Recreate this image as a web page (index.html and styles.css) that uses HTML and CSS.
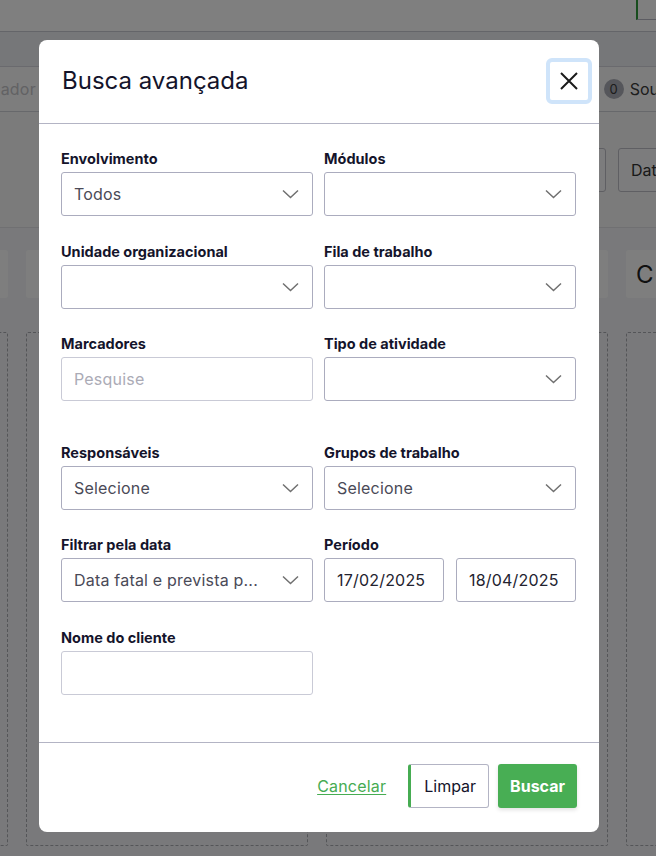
FILE: index.html
```html
<!DOCTYPE html>
<html lang="pt-BR">
<head>
<meta charset="utf-8">
<title>Busca avançada</title>
<link rel="stylesheet" href="styles.css">
</head>
<body>
<div class="app">
  <div class="app-top"><div class="top-btn"></div></div>
  <div class="app-nav"></div>
  <div class="app-search">
    <div class="search-text">Pesquise por marcador</div>
    <div class="badge-group"><span class="badge">0</span><span class="badge-label">Sou</span></div>
  </div>
  <div class="app-filters">
    <div class="filter-box"></div>
    <div class="filter-box filter-date">Data</div>
  </div>
  <div class="app-board">
    <div class="column"><div class="col-head"></div><div class="col-body"></div></div>
    <div class="column"><div class="col-head"></div><div class="col-body"></div></div>
    <div class="column"><div class="col-head"></div><div class="col-body"></div></div>
    <div class="column"><div class="col-head">C</div><div class="col-body"></div></div>
  </div>
</div>

<div class="overlay">
  <div class="modal">
    <div class="modal-header">
      <h1 class="modal-title">Busca avançada</h1>
      <button class="close-btn" aria-label="Fechar">
        <svg width="18" height="18" viewBox="0 0 18 18"><path d="M1 1 L17 17 M17 1 L1 17" stroke="#1a1a1a" stroke-width="2" fill="none"/></svg>
      </button>
    </div>
    <div class="modal-body">
      <div class="field">
        <label class="field-label">Envolvimento</label>
        <div class="select"><span class="value">Todos</span><svg class="chev" width="17" height="10" viewBox="0 0 17 10"><path d="M1 1.5 L8.5 8.5 L16 1.5" stroke="#707070" stroke-width="1.5" fill="none"/></svg></div>
      </div>
      <div class="field">
        <label class="field-label">Módulos</label>
        <div class="select"><span class="value"></span><svg class="chev" width="17" height="10" viewBox="0 0 17 10"><path d="M1 1.5 L8.5 8.5 L16 1.5" stroke="#707070" stroke-width="1.5" fill="none"/></svg></div>
      </div>
      <div class="field">
        <label class="field-label">Unidade organizacional</label>
        <div class="select"><span class="value"></span><svg class="chev" width="17" height="10" viewBox="0 0 17 10"><path d="M1 1.5 L8.5 8.5 L16 1.5" stroke="#707070" stroke-width="1.5" fill="none"/></svg></div>
      </div>
      <div class="field">
        <label class="field-label">Fila de trabalho</label>
        <div class="select"><span class="value"></span><svg class="chev" width="17" height="10" viewBox="0 0 17 10"><path d="M1 1.5 L8.5 8.5 L16 1.5" stroke="#707070" stroke-width="1.5" fill="none"/></svg></div>
      </div>
      <div class="field field-spaced">
        <label class="field-label">Marcadores</label>
        <div class="input"><span class="placeholder">Pesquise</span></div>
      </div>
      <div class="field field-spaced">
        <label class="field-label">Tipo de atividade</label>
        <div class="select"><span class="value"></span><svg class="chev" width="17" height="10" viewBox="0 0 17 10"><path d="M1 1.5 L8.5 8.5 L16 1.5" stroke="#707070" stroke-width="1.5" fill="none"/></svg></div>
      </div>
      <div class="field">
        <label class="field-label">Responsáveis</label>
        <div class="select"><span class="value">Selecione</span><svg class="chev" width="17" height="10" viewBox="0 0 17 10"><path d="M1 1.5 L8.5 8.5 L16 1.5" stroke="#707070" stroke-width="1.5" fill="none"/></svg></div>
      </div>
      <div class="field">
        <label class="field-label">Grupos de trabalho</label>
        <div class="select"><span class="value">Selecione</span><svg class="chev" width="17" height="10" viewBox="0 0 17 10"><path d="M1 1.5 L8.5 8.5 L16 1.5" stroke="#707070" stroke-width="1.5" fill="none"/></svg></div>
      </div>
      <div class="field">
        <label class="field-label">Filtrar pela data</label>
        <div class="select"><span class="value">Data fatal e prevista p...</span><svg class="chev" width="17" height="10" viewBox="0 0 17 10"><path d="M1 1.5 L8.5 8.5 L16 1.5" stroke="#707070" stroke-width="1.5" fill="none"/></svg></div>
      </div>
      <div class="field">
        <label class="field-label">Período</label>
        <div class="period">
          <div class="input date"><span class="date-text">17/02/2025</span></div>
          <div class="input date"><span class="date-text">18/04/2025</span></div>
        </div>
      </div>
      <div class="field">
        <label class="field-label">Nome do cliente</label>
        <div class="input"></div>
      </div>
    </div>
    <div class="modal-footer">
      <a class="cancel-link" href="#">Cancelar</a>
      <button class="btn btn-clear">Limpar</button>
      <button class="btn btn-search">Buscar</button>
    </div>
  </div>
</div>
</body>
</html>
```
FILE: styles.css
```css
* { box-sizing: border-box; }

body {
  margin: 0;
  width: 656px;
  height: 856px;
  overflow: hidden;
  position: relative;
  font-family: Inter, "Noto Sans", Roboto, sans-serif;
  background: #f2f3f6;
}

/* ---------- background app ---------- */
.app {
  width: 656px;
  height: 856px;
  overflow: hidden;
}

.app-top {
  height: 32px;
  background: #ffffff;
  border-bottom: 1px solid #c9cad2;
  display: flex;
  justify-content: flex-end;
}

.top-btn {
  width: 20px;
  height: 20px;
  border-left: 2px solid #2e9a3a;
  border-bottom: 1px solid #b8b8c4;
  background: #fff;
}

.app-nav {
  height: 35px;
  background: #eceef3;
  border-bottom: 1px solid #d4d5dc;
}

.app-search {
  height: 45px;
  background: #fbfbfb;
  border-bottom: 1px solid #cfd0d6;
  display: flex;
  align-items: center;
  justify-content: space-between;
}

.search-text {
  margin-left: -144px;
  font-size: 16px;
  letter-spacing: 0.2px;
  color: #c4c4c8;
  white-space: nowrap;
}

.badge-group {
  display: flex;
  align-items: center;
  gap: 6px;
  margin-right: -3px;
  white-space: nowrap;
}

.badge {
  width: 20px;
  height: 20px;
  border-radius: 50%;
  background: #abadb6;
  color: #3a3a3a;
  font-size: 13px;
  display: flex;
  align-items: center;
  justify-content: center;
}

.badge-label {
  font-size: 16px;
  color: #3c3c3c;
}

.app-filters {
  height: 116px;
  background: #f6f6f7;
  border-bottom: 1px solid #e0e0e4;
  display: flex;
  justify-content: flex-end;
  align-items: center;
  gap: 12px;
  padding-top: 1px;
  margin-right: -30px;
}

.filter-box {
  width: 50px;
  height: 44px;
  border: 1px solid #bebec6;
  border-radius: 3px;
  background: #f9f9fa;
}

.filter-date {
  width: 68px;
  font-size: 16px;
  color: #333;
  display: flex;
  align-items: center;
  padding-left: 12px;
}

.app-board {
  display: grid;
  grid-template-columns: repeat(4, 282px);
  column-gap: 18px;
  margin-left: -274px;
  padding-top: 22px;
}

.col-head {
  height: 48px;
  background: #fdfdfd;
  border-radius: 3px;
  font-size: 24px;
  color: #222;
  display: flex;
  align-items: center;
  padding-left: 10px;
}

.col-body {
  margin-top: 34px;
  height: 514px;
  border: 1px dashed #a9aab0;
  border-radius: 2px;
}

/* ---------- overlay + modal ---------- */
.overlay {
  position: absolute;
  inset: 0;
  background: rgba(0, 0, 0, 0.5);
  padding: 40px 0 0 39px;
}

.modal {
  width: 560px;
  height: 792px;
  background: #ffffff;
  border-radius: 8px;
  display: flex;
  flex-direction: column;
  overflow: hidden;
}

.modal-header {
  height: 84px;
  border-bottom: 1px solid #b3b4c4;
  display: flex;
  align-items: center;
  justify-content: space-between;
  padding: 0 7px 2px 23px;
}

.modal-title {
  margin: 0;
  font-size: 24px;
  font-weight: 400;
  color: #14142b;
}

.close-btn {
  width: 46px;
  height: 46px;
  border: 4px solid #cfe4fa;
  border-radius: 6px;
  background: #fff;
  padding: 0;
  display: flex;
  align-items: center;
  justify-content: center;
}

.modal-body {
  height: 618px;
  padding: 25px 22px 0 22px;
  display: grid;
  grid-template-columns: 252px 252px;
  column-gap: 11px;
  row-gap: 25.5px;
  align-content: start;
}

.field {
  display: flex;
  flex-direction: column;
  gap: 3px;
}

.field-spaced {
  padding-bottom: 16px;
}

.field-label {
  font-size: 14.5px;
  line-height: 20px;
  font-weight: 700;
  color: #14142b;
}

.select,
.input {
  height: 44px;
  border: 1px solid #abacbe;
  border-radius: 3px;
  background: #fff;
  display: flex;
  align-items: center;
  justify-content: space-between;
  padding: 0 13px 0 12px;
  font-size: 16px;
  letter-spacing: 0.2px;
  color: #4a4a57;
}

.input {
  border-color: #c9cad6;
}

.chev {
  flex: none;
}

.value {
  white-space: nowrap;
}

.placeholder {
  color: #ababb6;
}

.period {
  display: grid;
  grid-template-columns: 120px 120px;
  column-gap: 12px;
}

.input.date {
  border-color: #abacbe;
}

.date-text {
  color: #23232f;
}

.modal-footer {
  flex: 1;
  border-top: 1px solid #b3b4c4;
  display: flex;
  justify-content: flex-end;
  align-items: flex-start;
  padding: 21px 22px 0 0;
}

.cancel-link {
  font-size: 16px;
  letter-spacing: 0.2px;
  color: #46ac52;
  text-decoration: underline;
  text-underline-offset: 2px;
  line-height: 44px;
  margin-right: 22px;
}

.btn {
  height: 44px;
  font-family: inherit;
  font-size: 16px;
  border-radius: 3px;
  padding: 0 12px;
  cursor: pointer;
}

.btn-clear {
  background: #fff;
  color: #14142b;
  border: 1px solid #b3b4c4;
  border-left: 3px solid #46ac52;
  margin-right: 9px;
  padding: 0 12px 0 13px;
}

.btn-search {
  background: #48ae54;
  color: #fff;
  font-weight: 700;
  border: none;
  box-shadow: 0 2px 4px rgba(0, 0, 0, 0.12);
}
```
